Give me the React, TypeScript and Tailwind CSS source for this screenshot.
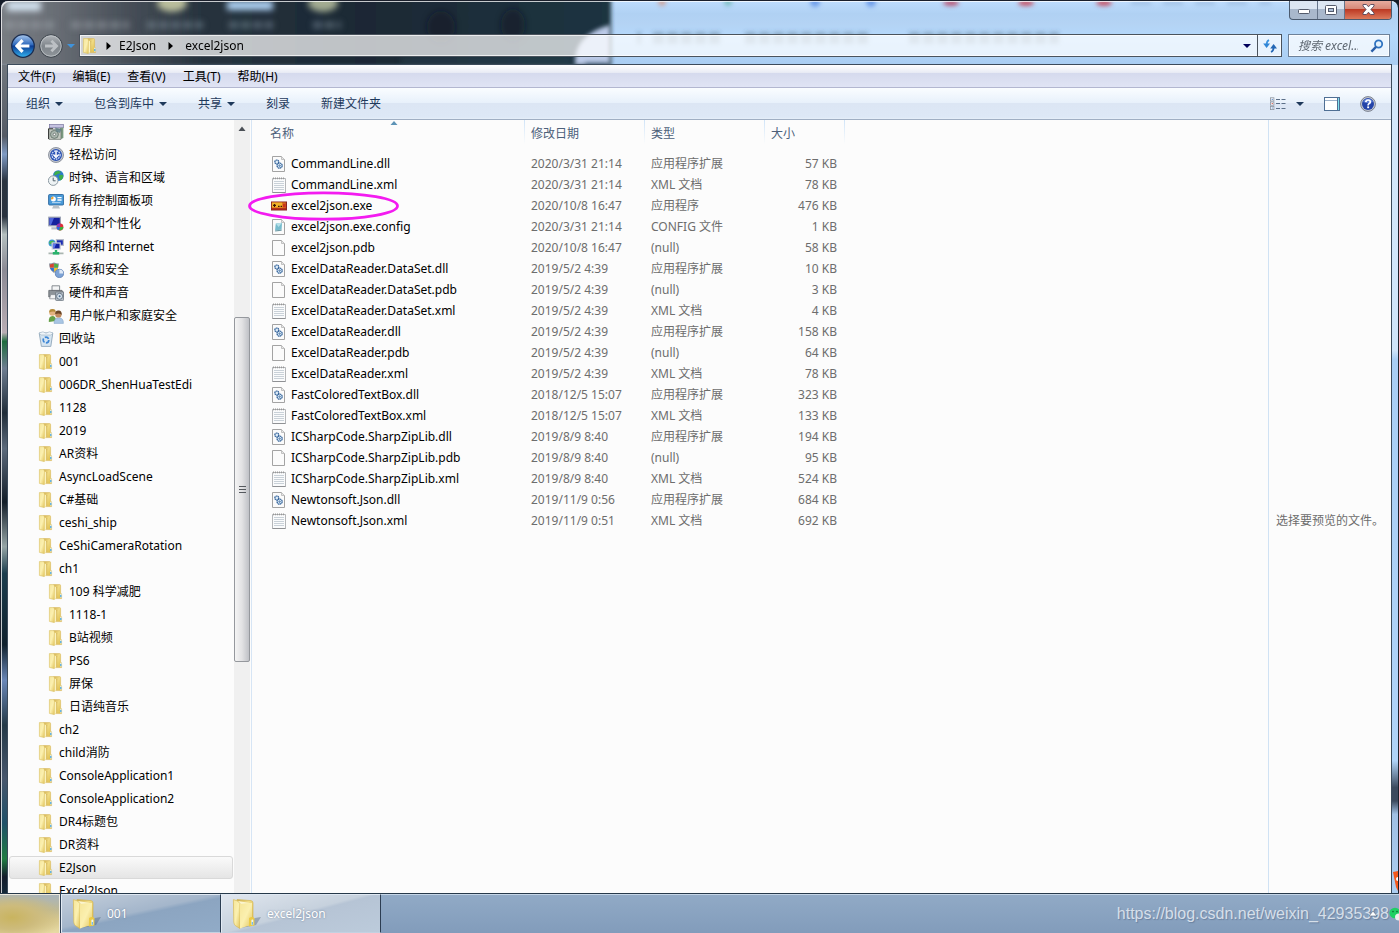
import React from "react";

type FileKind = "dll" | "xml" | "exe" | "config" | "blank";

interface FileRow {
  name: string;
  date: string;
  type: string;
  size: string;
  kind: FileKind;
}

const DLL = "应用程序扩展";
const XML = "XML 文档";

const FILES: FileRow[] = [
  { name: "CommandLine.dll", date: "2020/3/31 21:14", type: DLL, size: "57 KB", kind: "dll" },
  { name: "CommandLine.xml", date: "2020/3/31 21:14", type: XML, size: "78 KB", kind: "xml" },
  { name: "excel2json.exe", date: "2020/10/8 16:47", type: "应用程序", size: "476 KB", kind: "exe" },
  { name: "excel2json.exe.config", date: "2020/3/31 21:14", type: "CONFIG 文件", size: "1 KB", kind: "config" },
  { name: "excel2json.pdb", date: "2020/10/8 16:47", type: "(null)", size: "58 KB", kind: "blank" },
  { name: "ExcelDataReader.DataSet.dll", date: "2019/5/2 4:39", type: DLL, size: "10 KB", kind: "dll" },
  { name: "ExcelDataReader.DataSet.pdb", date: "2019/5/2 4:39", type: "(null)", size: "3 KB", kind: "blank" },
  { name: "ExcelDataReader.DataSet.xml", date: "2019/5/2 4:39", type: XML, size: "4 KB", kind: "xml" },
  { name: "ExcelDataReader.dll", date: "2019/5/2 4:39", type: DLL, size: "158 KB", kind: "dll" },
  { name: "ExcelDataReader.pdb", date: "2019/5/2 4:39", type: "(null)", size: "64 KB", kind: "blank" },
  { name: "ExcelDataReader.xml", date: "2019/5/2 4:39", type: XML, size: "78 KB", kind: "xml" },
  { name: "FastColoredTextBox.dll", date: "2018/12/5 15:07", type: DLL, size: "323 KB", kind: "dll" },
  { name: "FastColoredTextBox.xml", date: "2018/12/5 15:07", type: XML, size: "133 KB", kind: "xml" },
  { name: "ICSharpCode.SharpZipLib.dll", date: "2019/8/9 8:40", type: DLL, size: "194 KB", kind: "dll" },
  { name: "ICSharpCode.SharpZipLib.pdb", date: "2019/8/9 8:40", type: "(null)", size: "95 KB", kind: "blank" },
  { name: "ICSharpCode.SharpZipLib.xml", date: "2019/8/9 8:40", type: XML, size: "524 KB", kind: "xml" },
  { name: "Newtonsoft.Json.dll", date: "2019/11/9 0:56", type: DLL, size: "684 KB", kind: "dll" },
  { name: "Newtonsoft.Json.xml", date: "2019/11/9 0:51", type: XML, size: "692 KB", kind: "xml" },
];

const svg16 = { width: 16, height: 16, viewBox: "0 0 16 16", className: "shrink-0", "aria-hidden": true } as const;

function FolderGradients() {
  return (
    <svg width="0" height="0" className="absolute" aria-hidden="true">
      <defs>
        <linearGradient id="folderFront" x1="0" y1="0" x2="1" y2="1">
          <stop offset="0" stopColor="#f6e69a" />
          <stop offset="0.5" stopColor="#fbf0b0" />
          <stop offset="1" stopColor="#e2c45a" />
        </linearGradient>
        <linearGradient id="folderBack" x1="0" y1="0" x2="1" y2="1">
          <stop offset="0" stopColor="#cfae4d" />
          <stop offset="0.4" stopColor="#f1dc85" />
          <stop offset="1" stopColor="#dcb944" />
        </linearGradient>
      </defs>
    </svg>
  );
}

function FolderIcon() {
  return (
    <svg {...svg16}>
      <path d="M5.5 0.6 H11.6 Q12.6 0.6 12.6 1.6 V9 L13.6 10 V14.6 H5.5 Z" fill="url(#folderBack)" stroke="#d6b75a" strokeWidth="0.6" />
      <path d="M1.4 0.6 H5.4 Q6.4 0.9 6.4 2 V15.6 L1.4 14.4 Z" fill="url(#folderFront)" stroke="#d9bd60" strokeWidth="0.6" />
      <path d="M6.7 2.4 L8.6 3.4 V13.6 L6.7 15.4 Z" fill="#fbf2bd" />
      <path d="M8.7 3 V14" stroke="#c49f38" strokeWidth="0.6" />
      <rect x="12.2" y="9.8" width="1.3" height="3.8" fill="#dff0fa" />
      <rect x="12.2" y="11" width="1.2" height="2" fill="#4aa9e4" />
    </svg>
  );
}

function LargeFolderIcon() {
  return (
    <svg width="32" height="32" viewBox="0 0 32 32" className="shrink-0" aria-hidden="true">
      <path d="M10 30 L25 27 L30 19 L24 20 Z" fill="#3c5068" opacity=".35" />
      <path d="M6 1.5 L20 2.6 Q22 3 22 5 V27 L7 29 Z" fill="url(#folderBack)" stroke="#d0b04c" strokeWidth="0.6" />
      <path d="M7 3 L19 5 V27 L9 29 Z" fill="#fbf5cf" />
      <path d="M2.4 1.6 Q7.6 2.4 9 5.6 V30.6 L4.4 27.6 Q3 26.6 2.8 24 Z" fill="url(#folderFront)" stroke="#d8ba57" strokeWidth="0.7" />
      <path d="M9 6 L15 5.2 Q20 4.8 21 5 V26.6 L9 30.6 Z" fill="url(#folderFront)" />
      <path d="M18 20 Q21 18 23.4 20 V27.4 L18 28.4 Z" fill="#eccb45" />
      <rect x="20.4" y="21.6" width="1.9" height="5.6" rx="0.9" fill="#e8f4fb" />
      <rect x="20.8" y="24" width="1" height="2.8" fill="#5aaee4" />
    </svg>
  );
}

function ProgramsIcon() {
  return (
    <svg {...svg16}>
      <rect x="1.4" y="0.6" width="14" height="3.2" fill="#c5c2e0" stroke="#77749f" strokeWidth="0.7" />
      <path d="M12 4 L15.4 3.6 V14 L13 15 Z" fill="#7a9a80" />
      <path d="M0.5 15 V4.8 H5" fill="none" stroke="#222" />
      <path d="M1 5.2 H13 V15.4 H1 Z" fill="#c3c8c0" stroke="#6b746e" strokeWidth="0.7" />
      <circle cx="6.4" cy="10.4" r="4" fill="#a9b5ad" stroke="#606e66" strokeWidth="0.8" />
      <circle cx="6.4" cy="10.4" r="1.2" fill="#fff" stroke="#4b5650" strokeWidth="0.6" />
      <path d="M7 3.6 L13.6 5 L12 9 L8 7.4 Z" fill="#5c7d86" opacity=".8" />
    </svg>
  );
}

function AccessIcon() {
  return (
    <svg {...svg16}>
      <circle cx="8" cy="8" r="7.5" fill="#c3c7d0" stroke="#7b818e" strokeWidth="0.8" />
      <circle cx="8" cy="8" r="6" fill="#2a52b4" />
      <circle cx="8" cy="8" r="4.1" fill="none" stroke="#dbe6fa" strokeWidth="1.2" strokeDasharray="1.6 0.8" />
      <path d="M8 3.4 V9 M5.4 7.4 L8 10.4 L10.8 7.4" fill="none" stroke="#fff" strokeWidth="1.5" />
    </svg>
  );
}

function ClockGlobeIcon() {
  return (
    <svg {...svg16}>
      <circle cx="10.3" cy="5.6" r="5.3" fill="#2d7cc9" />
      <path d="M7 2 Q10 0 13 2 Q12 4 9.5 4 Q8 6 6 5 Z M11 5.5 Q14 4 15.4 6 Q15 9 12.4 10.4 Q10.6 8 11 5.5Z" fill="#3fae49" />
      <circle cx="5.2" cy="10.6" r="4.8" fill="#eef3f5" stroke="#8d9aa3" strokeWidth="1" />
      <path d="M5.2 7.6 V10.8 H7.6" fill="none" stroke="#4f5e69" strokeWidth="1" />
    </svg>
  );
}

function PanelIcon() {
  return (
    <svg {...svg16}>
      <rect x="0.6" y="1.5" width="15" height="10.5" rx="1" fill="#4a9ad8" stroke="#2a669e" strokeWidth="0.9" />
      <circle cx="5.4" cy="6" r="2.5" fill="#fff" />
      <path d="M5.4 6 V3.5 A2.5 2.5 0 0 0 3 6.6 Z" fill="#f2a533" />
      <path d="M9.4 4.6 H13.6 M9.4 7 H13.6" stroke="#fff" strokeWidth="1.3" />
      <path d="M4 9.6 H12.6" stroke="#cfe6f7" strokeWidth="0.8" />
      <path d="M5.5 12.4 L10.5 12.4 L12 15.4 H4 Z" fill="#b9c0c6" />
    </svg>
  );
}

function AppearanceIcon() {
  return (
    <svg {...svg16}>
      <rect x="0.8" y="1.2" width="11.6" height="8.6" fill="#15209e" stroke="#9ca3b4" strokeWidth="1.2" />
      <path d="M1.6 2 H6 L3 9 H1.6 Z" fill="#4f65dc" />
      <path d="M3.4 11.2 H9 V13.4 H3.4 Z" fill="#b7bcc8" />
      <circle cx="12" cy="11" r="3.4" fill="#de3036" />
      <path d="M12 11 L15.4 11 A3.4 3.4 0 0 1 11 14.3 Z" fill="#3aaf3f" />
      <path d="M12 11 L8.7 10 A3.4 3.4 0 0 1 12.4 7.6 Z" fill="#8a37c4" />
      <path d="M12 11 L11 14.3 A3.4 3.4 0 0 1 8.7 10.4 Z" fill="#2868e0" />
    </svg>
  );
}

function NetworkIcon() {
  return (
    <svg {...svg16}>
      <circle cx="4" cy="4" r="3.5" fill="#3b9ad4" />
      <path d="M1 3 Q4 1 6 2 Q4 5 2 5.6 Z" fill="#4bb551" />
      <rect x="8.4" y="0.7" width="7" height="5.6" fill="#1c2cb3" stroke="#b5bac6" strokeWidth="1.2" />
      <rect x="4.2" y="4" width="8" height="6" fill="#1420a3" stroke="#d0d4dc" strokeWidth="1.2" />
      <path d="M5 5 H8 L6.4 9.3 H5 Z" fill="#5c76ea" />
      <path d="M0.5 14.4 H15.5" stroke="#a9b5b0" strokeWidth="1.6" />
      <path d="M8 11 V14" stroke="#2bb36d" strokeWidth="2.4" />
      <rect x="4.8" y="13" width="6.4" height="2.6" fill="#2bb36d" />
    </svg>
  );
}

function SecurityIcon() {
  return (
    <svg {...svg16}>
      <path d="M6 0.6 Q9 1.6 11 1.6 Q11 8 6 11 Q1 8 1 1.6 Q3.4 1.6 6 0.6 Z" fill="#8f99a6" />
      <path d="M5.8 1.6 V5.6 H1.9 V2.6 Z" fill="#d8452e" />
      <path d="M6.2 1.6 V5.6 H10 V2.6 Z" fill="#4fae3e" />
      <path d="M5.8 6 V9.8 Q2.6 8 2 6 Z" fill="#2f6fd0" />
      <path d="M6.2 6 V9.8 Q9.4 8 10 6 Z" fill="#f2c42c" />
      <circle cx="11.4" cy="11.4" r="4.1" fill="#7da3d6" stroke="#6385b8" strokeWidth="0.9" />
      <path d="M11.4 11.4 V7.6 A3.8 3.8 0 0 1 15.2 11.4 Z" fill="#dfe9f6" />
    </svg>
  );
}

function HardwareIcon() {
  return (
    <svg {...svg16}>
      <path d="M4 0.8 H11.6 V6 H4 Z" fill="#f4f5f6" stroke="#7c8288" strokeWidth="0.9" />
      <path d="M0.8 5.4 H14 L15.2 7 V12 H0.8 Z" fill="#8d9399" stroke="#5c6167" strokeWidth="0.8" />
      <path d="M2.6 9.6 H8 V13.8 H1.6 Z" fill="#f1f2f4" stroke="#7c8288" strokeWidth="0.7" />
      <rect x="7.6" y="7" width="8" height="8.6" rx="1" fill="#b6bfc9" stroke="#69737e" strokeWidth="0.8" />
      <circle cx="11.6" cy="11.3" r="3" fill="#d7e3ee" stroke="#566574" strokeWidth="0.8" />
      <circle cx="11.6" cy="11.3" r="1" fill="#4a6a8b" />
    </svg>
  );
}

function UsersIcon() {
  return (
    <svg {...svg16}>
      <path d="M0.8 14 Q0.4 8 4.4 8 Q8 8 8 13 Z" fill="#64a046" />
      <circle cx="4.4" cy="4.6" r="3.2" fill="#e2b27f" />
      <path d="M1.2 4.4 Q1 0.8 4.6 1 Q8 1 7.6 4 Q5 2.6 1.2 4.4Z" fill="#b48b3a" />
      <path d="M6 15.4 Q6 9.8 10.8 9.8 Q15.6 9.8 15.4 15.4 Z" fill="#a9c6e4" stroke="#7d9fc4" strokeWidth="0.5" />
      <circle cx="10.4" cy="6.4" r="3.2" fill="#c08a5e" />
      <path d="M7.2 6 Q7 2.2 10.6 2.4 Q14.2 2.6 13.6 7 Q12.6 4.4 7.2 6Z" fill="#6a4526" />
    </svg>
  );
}

function RecycleIcon() {
  return (
    <svg {...svg16}>
      <path d="M1.2 2 L14.8 2 L12.8 15.4 H3.4 Z" fill="#d6e5f1" stroke="#8fa6b9" strokeWidth="0.9" />
      <path d="M1 2 L5 0.8 L8 2.2 L11.4 0.8 L15 2 L13 4 H3 Z" fill="#f0f5f9" stroke="#9db1c2" strokeWidth="0.6" />
      <circle cx="8" cy="9" r="2.8" fill="none" stroke="#3d86d6" strokeWidth="1.7" strokeDasharray="4.4 1.4" />
    </svg>
  );
}

function FileIcon({ kind }: { kind: FileKind }) {
  if (kind === "exe") {
    return (
      <svg {...svg16}>
        <rect x="0" y="3.5" width="16" height="9" fill="#8a2320" />
        <rect x="0.8" y="4.4" width="14" height="6" fill="#e07b1c" />
        <rect x="1" y="4.6" width="10" height="4.6" fill="#f0b429" />
        <path d="M2 7.4 H5 M3.5 6 V9 M7 8.4 H8.6 M9.6 8.4 H11" stroke="#3d1505" strokeWidth="1.1" />
        <path d="M12 5.6 L14.6 5.6 V9.4 H12 Z" fill="#c9341c" />
        <rect x="0.8" y="10.4" width="14" height="1.2" fill="#b8281a" />
      </svg>
    );
  }
  return (
    <svg {...svg16}>
      {kind === "xml" ? (
        <>
          <path d="M1.5 1.5 H14.5 V15.5 H1.5 Z" fill="#fafbfc" stroke="#b4b6b9" />
          <path d="M3 4.5 H13 M3 6.5 H13 M3 8.5 H13 M3 10.5 H13 M3 12.5 H13" stroke="#c9d1d8" />
          <path d="M2 1.4 H14" stroke="#979797" strokeWidth="1.8" strokeDasharray="1 1" />
          <path d="M1.5 15.5 H14.5" stroke="#8f9194" />
        </>
      ) : (
        <>
          <path d="M1.5 0.5 H10.5 L13.5 3.5 V15.5 H1.5 Z" fill="#fbfbfb" stroke="#a3a3a3" />
          <path d="M10.5 0.5 V3.5 H13.5" fill="#e6e6e6" stroke="#b5b5b5" strokeWidth="0.8" />
        </>
      )}
      {kind === "dll" && (
        <g fill="#dcebf7" stroke="#2f5f97" strokeWidth="1.2">
          <circle cx="5.8" cy="6" r="2" strokeDasharray="1.5 0.4" />
          <circle cx="8.6" cy="9.6" r="2.6" strokeDasharray="1.6 0.4" />
          <circle cx="8.6" cy="9.6" r="0.7" strokeWidth="0.8" />
        </g>
      )}
      {kind === "config" && (
        <>
          <path d="M4.8 4.4 L11 3.8 L10.6 10.6 L4 11.4 Z" fill="#78bccd" />
          <path d="M4.8 4.4 L11 3.8 L7.6 8 Z" fill="#b5e0e8" />
          <path d="M4 11.4 L10.6 10.6 L10.6 11.8 L4.2 12.4 Z" fill="#6c9aa5" />
        </>
      )}
    </svg>
  );
}

interface TreeNode {
  label: string;
  nested?: boolean;
  icon?: () => React.ReactElement;
  selected?: boolean;
}

const TREE: TreeNode[] = [
  { label: "程序", nested: true, icon: ProgramsIcon },
  { label: "轻松访问", nested: true, icon: AccessIcon },
  { label: "时钟、语言和区域", nested: true, icon: ClockGlobeIcon },
  { label: "所有控制面板项", nested: true, icon: PanelIcon },
  { label: "外观和个性化", nested: true, icon: AppearanceIcon },
  { label: "网络和 Internet", nested: true, icon: NetworkIcon },
  { label: "系统和安全", nested: true, icon: SecurityIcon },
  { label: "硬件和声音", nested: true, icon: HardwareIcon },
  { label: "用户帐户和家庭安全", nested: true, icon: UsersIcon },
  { label: "回收站", icon: RecycleIcon },
  { label: "001" },
  { label: "006DR_ShenHuaTestEdi" },
  { label: "1128" },
  { label: "2019" },
  { label: "AR资料" },
  { label: "AsyncLoadScene" },
  { label: "C#基础" },
  { label: "ceshi_ship" },
  { label: "CeShiCameraRotation" },
  { label: "ch1" },
  { label: "109 科学减肥", nested: true },
  { label: "1118-1", nested: true },
  { label: "B站视频", nested: true },
  { label: "PS6", nested: true },
  { label: "屏保", nested: true },
  { label: "日语纯音乐", nested: true },
  { label: "ch2" },
  { label: "child消防" },
  { label: "ConsoleApplication1" },
  { label: "ConsoleApplication2" },
  { label: "DR4标题包" },
  { label: "DR资料" },
  { label: "E2Json", selected: true },
  { label: "Excel2Json" },
];

function Caret({ className = "text-[#1e395b]" }: { className?: string }) {
  return (
    <svg width="8" height="4" viewBox="0 0 8 4" className={className} aria-hidden="true">
      <path d="M0 0 H8 L4 4 Z" fill="currentColor" />
    </svg>
  );
}

function Crumb() {
  return (
    <svg width="5" height="8" viewBox="0 0 5 8" aria-hidden="true">
      <path d="M0.5 0 L5 4 L0.5 8 Z" fill="#000" />
    </svg>
  );
}

/* Blurred desktop seen through the glass frame. */
function GlassBackdrop() {
  return (
    <svg className="absolute inset-0 h-full w-full" aria-hidden="true">
      <defs>
        <linearGradient id="darkGlass" x1="0" y1="0" x2="1" y2="0">
          <stop offset="0" stopColor="#7b7f85" />
          <stop offset="0.1" stopColor="#6a6f76" />
          <stop offset="0.2" stopColor="#4d545d" />
          <stop offset="0.34" stopColor="#27333e" />
          <stop offset="0.6" stopColor="#1a2834" />
          <stop offset="1" stopColor="#1f3441" />
        </linearGradient>
        <linearGradient id="lightGlass" x1="0" y1="0" x2="0" y2="64" gradientUnits="userSpaceOnUse">
          <stop offset="0" stopColor="#bddcfd" />
          <stop offset="0.2" stopColor="#b0d1f3" />
          <stop offset="0.35" stopColor="#b4d3f4" />
          <stop offset="0.55" stopColor="#b4d8fb" />
          <stop offset="1" stopColor="#a9cdf2" />
        </linearGradient>
        <linearGradient id="edge" x1="0" y1="0" x2="0" y2="1">
          <stop offset="0" stopColor="#70767e" />
          <stop offset="0.08" stopColor="#555b65" />
          <stop offset="0.1" stopColor="#7f9bc4" />
          <stop offset="0.13" stopColor="#2a333f" />
          <stop offset="0.17" stopColor="#29323e" />
          <stop offset="0.19" stopColor="#b5c0c0" />
          <stop offset="0.23" stopColor="#8b8a94" />
          <stop offset="0.3" stopColor="#b9adb4" />
          <stop offset="0.31" stopColor="#1d6b3d" />
          <stop offset="0.34" stopColor="#6e7d90" />
          <stop offset="0.39" stopColor="#202c38" />
          <stop offset="0.43" stopColor="#5c6a7b" />
          <stop offset="0.49" stopColor="#131d28" />
          <stop offset="0.54" stopColor="#96a5a6" />
          <stop offset="0.57" stopColor="#1b3d4d" />
          <stop offset="0.65" stopColor="#10212d" />
          <stop offset="0.69" stopColor="#6a87b7" />
          <stop offset="0.74" stopColor="#243947" />
          <stop offset="0.8" stopColor="#47566c" />
          <stop offset="0.85" stopColor="#1f5068" />
          <stop offset="0.89" stopColor="#1f7c42" />
          <stop offset="0.91" stopColor="#141c2b" />
          <stop offset="0.96" stopColor="#123e52" />
        </linearGradient>
        <linearGradient id="rightEdge" x1="0" y1="0" x2="0" y2="1">
          <stop offset="0" stopColor="#d5e8fb" />
          <stop offset="0.32" stopColor="#cfe4fa" />
          <stop offset="0.33" stopColor="#a9cef5" />
          <stop offset="0.78" stopColor="#b0d3f8" />
          <stop offset="0.81" stopColor="#3c4a5e" />
          <stop offset="0.825" stopColor="#3c4a5e" />
          <stop offset="0.84" stopColor="#a0c0e4" />
          <stop offset="1" stopColor="#b6d8fb" />
        </linearGradient>
        <filter id="soft" x="-20%" y="-50%" width="140%" height="200%">
          <feGaussianBlur stdDeviation="3" />
        </filter>
        <filter id="softer" x="-20%" y="-50%" width="140%" height="200%">
          <feGaussianBlur stdDeviation="2" />
        </filter>
      </defs>
      <rect width="100%" height="100%" fill="url(#lightGlass)" />
      <svg x="100%" width="8" height="100%" overflow="visible">
        <rect x="-8" y="64" width="8" height="100%" fill="url(#rightEdge)" />
      </svg>
      <rect x="-10" y="-10" width="620" height="76" fill="url(#darkGlass)" filter="url(#softer)" />
      <rect y="64" width="9" height="100%" fill="url(#edge)" />
      <g filter="url(#soft)">
        <rect x="6" y="0" width="34" height="10" fill="#d3e2ef" />
        <ellipse cx="171" cy="2" rx="15" ry="9" fill="#b9be9c" />
        <rect x="226" y="0" width="46" height="9" fill="#b4d8fb" />
        <ellipse cx="322" cy="2" rx="15" ry="9" fill="#a3ac92" />
        <path d="M4 24 H56 M70 24 H128" stroke="#a1a8af" strokeWidth="7" strokeDasharray="10 3" opacity=".5" />
        <path d="M146 24 H202 M228 24 H272 M312 24 H340" stroke="#8797a5" strokeWidth="7" strokeDasharray="9 3" opacity=".5" />
        <ellipse cx="440" cy="26" rx="14" ry="16" fill="#101b26" opacity=".5" />
        <ellipse cx="512" cy="24" rx="12" ry="16" fill="#101b26" opacity=".5" />
        <path d="M400 60 H570" stroke="#31505e" strokeWidth="5" opacity=".5" />
      </g>
      <g filter="url(#softer)">
        <path d="M574 64 Q572 34 609 24 V64 Z" fill="#bccbe8" />
        <path d="M584 63 H608" stroke="#2f5775" strokeWidth="3" />
        <path d="M636 37 H640 M652 37 H722 M744 37 H868 M908 37 H1058" stroke="#46596f" strokeWidth="12" strokeDasharray="11 3" opacity=".35" />
        <circle cx="661" cy="1" r="4" fill="#cba7a2" />
        <circle cx="727" cy="1" r="4" fill="#7fc0c4" />
        <circle cx="814" cy="1" r="5" fill="#6f9fea" />
        <circle cx="870" cy="1" r="5" fill="#6f9fea" />
        <ellipse cx="950" cy="2" rx="8" ry="3" fill="#b95a78" />
        <ellipse cx="1025" cy="2" rx="8" ry="3" fill="#c4566b" />
        <ellipse cx="1103" cy="2" rx="8" ry="3" fill="#c4566b" />
        <path d="M1130 2 H1270" stroke="#87a5cb" strokeWidth="3" strokeDasharray="20 12" opacity=".6" />
      </g>
    </svg>
  );
}

function TitleBar() {
  return (
    <header className="relative flex h-16 shrink-0 flex-col">
      <div className="flex h-5 justify-end">
        <div className="flex overflow-hidden rounded-b border border-t-0 border-[#4b5a6e] bg-gradient-to-b from-[#dce6f2] from-45% to-[#a9b8cc] to-50%">
          <button type="button" aria-label="最小化" className="flex w-7 items-center justify-center border-r border-[#65748a] pt-1">
            <svg width="12" height="5" viewBox="0 0 12 5"><rect x="0.5" y="0.5" width="11" height="4" rx="1" fill="#fff" stroke="#545b6b" /></svg>
          </button>
          <button type="button" aria-label="最大化" className="flex w-[27px] items-center justify-center border-r border-[#65748a]">
            <svg width="12" height="10" viewBox="0 0 12 10">
              <rect x="0.5" y="0.5" width="11" height="9" rx="1" fill="#fff" stroke="#545b6b" />
              <rect x="3.5" y="3.5" width="5" height="3" fill="#aebfd6" stroke="#545b6b" />
            </svg>
          </button>
          <button type="button" aria-label="关闭" className="flex w-[46px] items-center justify-center bg-[linear-gradient(to_bottom,#e9b0a3_0%,#d78a79_45%,#bd3a24_50%,#dc7a5c_100%)]">
            <svg width="13" height="11" viewBox="0 0 13 11">
              <path d="M1 0.5 H4.4 L6.5 2.8 L8.6 0.5 H12 V2 L8.9 5.5 L12 9 V10.5 H8.6 L6.5 8.2 L4.4 10.5 H1 V9 L4.1 5.5 L1 2 Z" fill="#fff" stroke="#53455a" strokeWidth="0.9" />
            </svg>
          </button>
        </div>
      </div>
      <div className="mt-[11px] flex h-[29px] items-center pl-1">
        <div className="flex items-center gap-1">
          <button type="button" aria-label="后退">
            <svg width="24" height="24" viewBox="0 0 24 24">
              <defs>
                <linearGradient id="back" x1="0" y1="0" x2="0" y2="1">
                  <stop offset="0" stopColor="#a9c8ee" />
                  <stop offset="0.45" stopColor="#2d68bc" />
                  <stop offset="0.5" stopColor="#0b3c95" />
                  <stop offset="1" stopColor="#35b4f0" />
                </linearGradient>
              </defs>
              <circle cx="12" cy="12" r="11.3" fill="url(#back)" stroke="#1b2d50" strokeWidth="1.2" />
              <path d="M11.6 6.2 L6 12 L11.6 17.8 M6.8 12 H18.4" fill="none" stroke="#fff" strokeWidth="3.2" />
            </svg>
          </button>
          <button type="button" aria-label="前进">
            <svg width="24" height="24" viewBox="0 0 24 24">
              <defs>
                <linearGradient id="fwd" x1="0" y1="0" x2="0" y2="1">
                  <stop offset="0" stopColor="#b3b7bb" />
                  <stop offset="0.5" stopColor="#7f858b" />
                  <stop offset="1" stopColor="#8f959a" />
                </linearGradient>
              </defs>
              <circle cx="12" cy="12" r="11.3" fill="url(#fwd)" stroke="#3d444c" strokeWidth="1" />
              <circle cx="12" cy="12" r="10.2" fill="none" stroke="#c2c6ca" strokeWidth="0.8" />
              <path d="M12.4 6.8 L17.6 12 L12.4 17.2 M16.6 12 H6" fill="none" stroke="#bcc0c4" strokeWidth="2.8" />
            </svg>
          </button>
          <button type="button" aria-label="最近的页面">
            <Caret className="text-[#3f93dc]" />
          </button>
        </div>
        <div className="ml-1 flex h-[23px] min-w-0 flex-1 items-center border border-[#4a535d] bg-white/72 text-black shadow-[inset_0_0_0_1px_rgba(255,255,255,0.7)]">
          <nav aria-label="地址" className="flex flex-1 items-center pl-[2px]">
            <FolderIcon />
            <span className="px-2"><Crumb /></span>
            <a href="#e2json">E2Json</a>
            <span className="px-3"><Crumb /></span>
            <a href="#excel2json">excel2json</a>
          </nav>
          <button type="button" aria-label="以前的位置" className="px-[6px]"><Caret className="text-[#00005a]" /></button>
          <button type="button" aria-label="刷新" className="flex h-full w-6 items-center justify-center border-l border-[#4a535d]">
            <svg width="14" height="14" viewBox="0 0 14 14">
              <path d="M6 1 Q3.6 2 3.6 6" fill="none" stroke="#3d93de" strokeWidth="1.8" />
              <path d="M0.2 4.6 H7 L3.6 9 Z" fill="#3186d6" />
              <path d="M8 13 Q10.6 12 10.6 8.6" fill="none" stroke="#2467b5" strokeWidth="1.8" />
              <path d="M7.2 9.4 H14 L10.6 5 Z" fill="#2467b5" />
            </svg>
          </button>
        </div>
        <label className="ml-[6px] mr-[2px] flex h-[23px] w-[102px] items-center border border-[#6d8199] bg-white/75 pl-[9px] shadow-[inset_0_0_0_1px_rgba(255,255,255,0.7)]">
          <input type="search" aria-label="搜索" placeholder="搜索 excel..." className="w-[72px] bg-transparent italic outline-none placeholder:text-[#5f6872]" />
          <svg width="14" height="14" viewBox="0 0 14 14" aria-hidden="true">
            <circle cx="8.6" cy="5" r="3.6" fill="#e3f1fc" stroke="#2f73c0" strokeWidth="1.8" />
            <path d="M6 7.8 L1.4 12.6" stroke="#2b5fa8" strokeWidth="2.4" />
          </svg>
        </label>
      </div>
    </header>
  );
}

function MenuBar() {
  return (
    <nav aria-label="菜单" className="flex h-[23px] shrink-0 items-center gap-[17px] border-b border-[#b3b7d0] bg-[linear-gradient(to_bottom,#ffffff_0%,#e9ecf5_34%,#d5daed_36%,#e0e4f4_100%)] pl-[10px] pt-[2px] text-black">
      {["文件(F)", "编辑(E)", "查看(V)", "工具(T)", "帮助(H)"].map((m) => (
        <button key={m} type="button">{m}</button>
      ))}
    </nav>
  );
}

function Toolbar() {
  return (
    <div className="flex h-8 shrink-0 items-center gap-[31px] border-b border-[#a0afc3] bg-[linear-gradient(to_bottom,#fafdff_0%,#e8f1fb_47%,#dce6f4_50%,#dde8f6_94%,#e6eff9_100%)] pl-[18px] pr-[15px] text-[#1e395b]">
      {[
        { label: "组织", menu: true },
        { label: "包含到库中", menu: true },
        { label: "共享", menu: true },
        { label: "刻录", menu: false },
        { label: "新建文件夹", menu: false },
      ].map((b) => (
        <button key={b.label} type="button" className="flex items-center gap-[5px]">
          {b.label}
          {b.menu && <Caret />}
        </button>
      ))}
      <div className="ml-auto flex items-center gap-[19px]">
        <button type="button" aria-label="更改您的视图" className="flex items-center gap-[10px]">
          <svg width="16" height="14" viewBox="0 0 16 14">
            <g fill="#fff" stroke="#8a93a0" strokeWidth="0.8">
              <rect x="0.5" y="0.8" width="3.4" height="3.2" /><rect x="0.5" y="5" width="3.4" height="3.2" /><rect x="0.5" y="9.4" width="3.4" height="3.2" />
            </g>
            <path d="M1.7 2.4 H2.8" stroke="#3a76c4" /><path d="M1.7 6.6 H2.8" stroke="#cc3b2c" /><path d="M1.7 11 H2.8" stroke="#3a76c4" />
            <path d="M6 2.5 H10 M11.5 2.5 H15.5 M6 6.5 H10 M11.5 6.5 H15.5 M6 11.5 H10 M11.5 11.5 H15.5" stroke="#5b6f88" />
          </svg>
          <Caret />
        </button>
        <button type="button" aria-label="隐藏预览窗格">
          <svg width="18" height="14" viewBox="0 0 18 14">
            <rect x="1.5" y="0.5" width="15" height="13" fill="#fff" stroke="#4f6f94" />
            <path d="M2 3.5 H14" stroke="#9db2ca" />
            <path d="M14.5 1 V13" stroke="#4f6f94" />
            <path d="M15.5 1 V13" stroke="#7fe0ee" />
          </svg>
        </button>
        <button type="button" aria-label="获取帮助">
          <svg width="16" height="16" viewBox="0 0 16 16">
            <circle cx="8" cy="8" r="7.4" fill="#c7ccd6" stroke="#6f7684" strokeWidth="0.9" />
            <circle cx="8" cy="8" r="6" fill="#2444a8" />
            <path d="M3 6 A5.4 5.4 0 0 1 13 6 Q8 8 3 6Z" fill="#5f80d6" />
            <path d="M5.8 6.2 Q6 4 8.1 4 Q10.3 4 10.3 5.9 Q10.3 7.1 8.9 7.8 Q8.1 8.2 8.1 9.4" fill="none" stroke="#fff" strokeWidth="1.7" />
            <rect x="7.2" y="10.4" width="1.9" height="1.8" fill="#fff" />
          </svg>
        </button>
      </div>
    </div>
  );
}

function NavTree() {
  return (
    <aside className="flex w-[244px] shrink-0 border-r border-[#d6e5f5]">
      <ul className="min-w-0 flex-1 overflow-hidden px-px">
        {TREE.map((n) => {
          const Icon = n.icon ?? FolderIcon;
          return (
            <li key={n.label}>
              <a
                href="#folder"
                className={
                  "flex h-[23px] items-center gap-[5px] whitespace-nowrap rounded-[3px] border " +
                  (n.selected ? "border-[#d9d9d9] bg-gradient-to-b from-[#fafafa] to-[#e5e5e5] " : "border-transparent ") +
                  (n.nested ? "pl-[38px]" : "pl-7")
                }
              >
                <Icon />
                {n.label}
              </a>
            </li>
          );
        })}
      </ul>
      <div className="mr-px flex w-4 flex-col items-center bg-[#f0f0f0]" aria-hidden="true">
        <svg width="8" height="18" viewBox="0 0 8 18"><path d="M4 6.5 L7.5 11 H0.5 Z" fill="#4a4f55" /></svg>
        <div className="basis-[179px]" />
        <div className="flex basis-[345px] flex-col items-center justify-center gap-[2px] self-stretch rounded-[2px] border border-[#95989d] bg-gradient-to-r from-[#f4f4f4] via-[#e2e2e4] to-[#bfc1c6]">
          <div className="h-px w-[7px] bg-[#55595e]" />
          <div className="h-px w-[7px] bg-[#55595e]" />
          <div className="h-px w-[7px] bg-[#55595e]" />
        </div>
      </div>
    </aside>
  );
}

const TH = "h-[33px] p-0 font-normal text-left align-top";

function HeadCell({ label, first }: { label: string; first?: boolean }) {
  return (
    <div className="flex h-6 items-stretch">
      <span className={"flex-1 pt-[6px] " + (first ? "pl-[18px]" : "pl-[6px]")}>{label}</span>
      <span className="w-px bg-gradient-to-b from-[#d0e4f8] to-transparent" />
    </div>
  );
}

function FileList() {
  return (
    <main className="relative min-w-0 flex-1">
      <table className="w-[593px] table-fixed border-collapse text-[#6d6d6d]">
        <colgroup>
          <col className="w-[273px]" />
          <col className="w-[120px]" />
          <col className="w-[120px]" />
          <col className="w-[80px]" />
        </colgroup>
        <thead className="text-[#4c607a]">
          <tr>
            <th className={TH} aria-sort="ascending">
              <div className="relative">
                <HeadCell label="名称" first />
                <svg className="absolute left-[138px] top-0" width="8" height="5" viewBox="0 0 8 5" aria-hidden="true">
                  <path d="M4 1 L7.5 5 H0.5 Z" fill="#5d93b6" />
                </svg>
              </div>
            </th>
            <th className={TH}><HeadCell label="修改日期" /></th>
            <th className={TH}><HeadCell label="类型" /></th>
            <th className={TH}><HeadCell label="大小" /></th>
          </tr>
        </thead>
        <tbody>
          {FILES.map((f) => (
            <tr key={f.name} className="h-[21px]">
              <td className="p-0">
                <div className="relative flex h-[21px] items-center gap-1 pl-[19px] text-black">
                  <FileIcon kind={f.kind} />
                  {f.name}
                  {f.kind === "exe" && (
                    <svg className="absolute -left-1 -top-1 z-10" width="152" height="30" viewBox="0 0 152 30" aria-hidden="true">
                      <ellipse cx="75.5" cy="15" rx="74" ry="13.2" fill="none" stroke="#f31bf0" strokeWidth="2.8" />
                    </svg>
                  )}
                </div>
              </td>
              <td className="p-0 pl-[6px]">{f.date}</td>
              <td className="p-0 pl-[6px]">{f.type}</td>
              <td className="p-0 pr-2 text-right">{f.size}</td>
            </tr>
          ))}
        </tbody>
      </table>
    </main>
  );
}

function TaskButton({ label, active }: { label: string; active?: boolean }) {
  return (
    <button
      type="button"
      className={
        "flex w-40 items-center gap-1 border border-l-[#e3ebf4] border-t-[#dfe8f2] border-b-[#c3d1e1] border-r-[#2c3d52] pl-[9px] text-white [text-shadow:0_0_2px_rgba(60,80,110,0.6)] " +
        (active
          ? "bg-[linear-gradient(165deg,#e0e6ee_0%,#c6d1dd_48%,#b6c4d5_52%,#bccbdb_100%)]"
          : "bg-[linear-gradient(168deg,#c3cedb_0%,#a4b6cb_46%,#8ca5c1_52%,#91abc7_100%)]")
      }
    >
      <LargeFolderIcon />
      {label}
    </button>
  );
}

function Taskbar() {
  return (
    <footer className="relative flex h-10 shrink-0 overflow-hidden border-t border-[#26394a] bg-gradient-to-b from-[#91aac6] to-[#829cbb] shadow-[inset_0_1px_0_#c5d6e8]">
      <button type="button" aria-label="开始" className="w-[61px] border-r border-[#2c3d52] bg-[radial-gradient(ellipse_at_20%_60%,#c9b45f_0%,#cdbb7c_35%,transparent_75%),linear-gradient(to_bottom,#a8b4bd_0%,#bdb998_40%,#d8ca92_65%,#e8dba4_100%)] shadow-[inset_-1px_1px_0_#eeeadd]" />
      <TaskButton label="001" />
      <TaskButton label="excel2json" active />
      <div className="ml-auto flex items-center">
        <span className="font-['Liberation_Sans',sans-serif] text-base text-[#d6dfe9] [text-shadow:1px_1px_1px_rgba(80,100,130,0.5)]">
          https://blog.csdn.net/weixin_42935398
        </span>
        <svg width="10" height="16" viewBox="0 0 10 16" className="overflow-hidden" aria-hidden="true">
          <ellipse cx="6" cy="7" rx="5.6" ry="5.2" fill="#1fd063" />
          <circle cx="4" cy="5.6" r="0.8" fill="#0a6a31" />
          <circle cx="8" cy="5.6" r="0.8" fill="#0a6a31" />
          <ellipse cx="10" cy="11" rx="4" ry="3.6" fill="#ecefee" />
        </svg>
      </div>
      <svg className="absolute right-[22px] top-[17px]" width="8" height="6" viewBox="0 0 8 6" aria-hidden="true">
        <path d="M4 0 L8 5 H0 Z" fill="#fff" stroke="#4b5f79" strokeWidth="0.6" />
      </svg>
    </footer>
  );
}

export default function App() {
  return (
    <div className="flex h-screen flex-col overflow-hidden bg-[#141c28] font-['Noto_Sans','Noto_Sans_CJK_SC',sans-serif] text-xs leading-4 text-black">
      <FolderGradients />
      <div className="relative flex min-h-0 flex-1 flex-col overflow-hidden rounded-t-lg border-x border-t border-[#1a1f2b]">
        <GlassBackdrop />
        <div className="relative -mt-px flex min-h-0 flex-1 flex-col rounded-t-lg px-[6px] shadow-[inset_1px_2px_0_rgba(255,255,255,0.75)]">
          <TitleBar />
          <div className="flex min-h-0 flex-1 flex-col border-x border-t border-[#3c4b5b] bg-[#fcfcfc]">
            <MenuBar />
            <Toolbar />
            <div className="flex min-h-0 flex-1">
              <NavTree />
              <FileList />
              <section aria-label="预览" className="flex w-[123px] shrink-0 items-center justify-center whitespace-nowrap border-l border-[#d0e2f4] pt-7 text-[#6d6d6d]">
                选择要预览的文件。
              </section>
            </div>
          </div>
        </div>
        <svg className="absolute bottom-0 right-0" width="5" height="22" viewBox="0 0 5 22" aria-hidden="true">
          <path d="M0 1 L5 0 V20 L3 16 Z" fill="#f4581c" />
          <circle cx="5" cy="8" r="2" fill="#fff" />
        </svg>
      </div>
      <Taskbar />
    </div>
  );
}
